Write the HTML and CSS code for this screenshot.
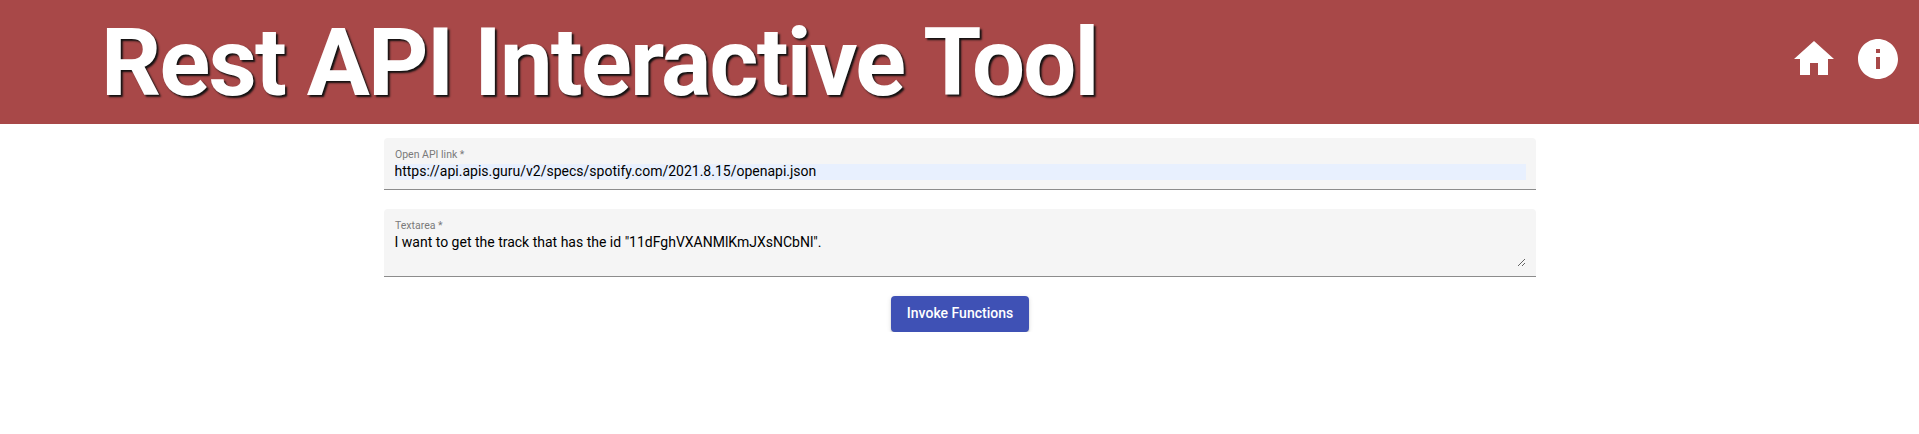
FILE: index.html
```html
<!DOCTYPE html>
<html lang="en">
<head>
<meta charset="utf-8">
<title>Rest API Interactive Tool</title>
<link rel="stylesheet" href="styles.css">
</head>
<body>
<header class="toolbar">
  <h1 class="title">Rest API Interactive Tool</h1>
  <nav class="actions">
    <svg class="icon" viewBox="0 0 24 24"><path d="M10 20v-6h4v6h5v-8h3L12 3 2 12h3v8z"/></svg>
    <svg class="icon" viewBox="0 0 24 24"><path d="M12 2C6.480 2 2 6.480 2 12s4.480 10 10 10 10-4.480 10-10S17.520 2 12 2zm1 15h-2v-6h2v6zm0-8h-2V7h2v2z"/></svg>
  </nav>
</header>
<main class="form">
  <div class="field">
    <label class="label" for="link">Open API link *</label>
    <input class="input autofilled" id="link" value="https://api.apis.guru/v2/specs/spotify.com/2021.8.15/openapi.json">
  </div>
  <div class="field">
    <label class="label" for="prompt">Textarea *</label>
    <textarea class="input area" id="prompt" spellcheck="false">I want to get the track that has the id "11dFghVXANMlKmJXsNCbNl".</textarea>
  </div>
  <button class="button">Invoke Functions</button>
</main>
</body>
</html>
```
FILE: styles.css
```css
body {
  margin: 0;
  font-family: Roboto, sans-serif;
  background: #fff;
}
.toolbar {
  display: flex;
  align-items: center;
  justify-content: space-between;
  height: 124px;
  padding: 0 17px 0 101px;
  box-sizing: border-box;
  background: #a84848;
}
.title {
  margin: 0;
  padding-top: 2px;
  font-size: 94px;
  font-weight: 700;
  line-height: 122px;
  letter-spacing: -1.76px;
  white-space: nowrap;
  color: #fff;
  text-shadow: 2px 2px 2px #111;
}
.actions {
  display: flex;
  gap: 16px;
  padding-bottom: 6px;
}
.icon {
  width: 48px;
  height: 48px;
  fill: #fff;
}
.form {
  display: flex;
  flex-direction: column;
  align-items: center;
  width: 1152px;
  margin: 0 0 0 384px;
  padding-top: 14px;
}
.field {
  display: flex;
  flex-direction: column;
  width: 100%;
  box-sizing: border-box;
  margin-bottom: 19px;
  padding: 10px 10px 9px 11px;
  border-bottom: 1px solid #8c8c8c;
  border-radius: 4px 4px 0 0;
  background: #f5f5f5;
}
.label {
  height: 16px;
  font-size: 10.5px;
  line-height: 13px;
  color: #7a7a7a;
}
.input {
  display: block;
  box-sizing: border-box;
  width: 100%;
  height: 16px;
  margin: 0;
  padding: 0 0 2px;
  border: 0;
  outline: 0;
  font: 14px/15px Roboto, sans-serif;
  color: #000;
  background: transparent;
  text-indent: -0.5px;
}
.autofilled {
  background: #e8f0fe;
}
.area {
  height: 32px;
  resize: vertical;
  overflow: hidden;
}
.button {
  width: 138px;
  height: 36px;
  padding: 0 0 1px;
  border: 0;
  border-radius: 4px;
  font: 500 14px/35px Roboto, sans-serif;
  color: #fff;
  background: #3f51b5;
  box-shadow: 0 3px 1px -2px rgba(0,0,0,.2), 0 2px 2px 0 rgba(0,0,0,.14), 0 1px 5px 0 rgba(0,0,0,.12);
}
```
